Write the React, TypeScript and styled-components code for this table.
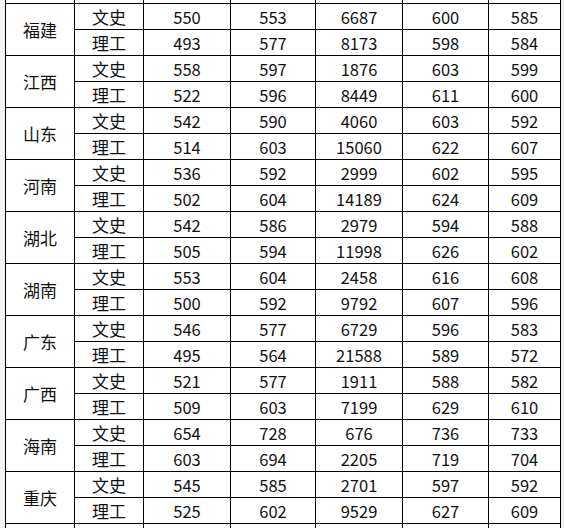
import React from "react";
import styled, { createGlobalStyle } from "styled-components";

interface Track {
  track: string;
  scores: string[];
}

interface Province {
  name: string;
  tracks: Track[];
}

const COLUMN_WIDTHS = [69, 69, 87, 85, 87, 86, 72];

const PROVINCES: Province[] = [
  {
    name: "福建",
    tracks: [
      { track: "文史", scores: ["550", "553", "6687", "600", "585"] },
      { track: "理工", scores: ["493", "577", "8173", "598", "584"] },
    ],
  },
  {
    name: "江西",
    tracks: [
      { track: "文史", scores: ["558", "597", "1876", "603", "599"] },
      { track: "理工", scores: ["522", "596", "8449", "611", "600"] },
    ],
  },
  {
    name: "山东",
    tracks: [
      { track: "文史", scores: ["542", "590", "4060", "603", "592"] },
      { track: "理工", scores: ["514", "603", "15060", "622", "607"] },
    ],
  },
  {
    name: "河南",
    tracks: [
      { track: "文史", scores: ["536", "592", "2999", "602", "595"] },
      { track: "理工", scores: ["502", "604", "14189", "624", "609"] },
    ],
  },
  {
    name: "湖北",
    tracks: [
      { track: "文史", scores: ["542", "586", "2979", "594", "588"] },
      { track: "理工", scores: ["505", "594", "11998", "626", "602"] },
    ],
  },
  {
    name: "湖南",
    tracks: [
      { track: "文史", scores: ["553", "604", "2458", "616", "608"] },
      { track: "理工", scores: ["500", "592", "9792", "607", "596"] },
    ],
  },
  {
    name: "广东",
    tracks: [
      { track: "文史", scores: ["546", "577", "6729", "596", "583"] },
      { track: "理工", scores: ["495", "564", "21588", "589", "572"] },
    ],
  },
  {
    name: "广西",
    tracks: [
      { track: "文史", scores: ["521", "577", "1911", "588", "582"] },
      { track: "理工", scores: ["509", "603", "7199", "629", "610"] },
    ],
  },
  {
    name: "海南",
    tracks: [
      { track: "文史", scores: ["654", "728", "676", "736", "733"] },
      { track: "理工", scores: ["603", "694", "2205", "719", "704"] },
    ],
  },
  {
    name: "重庆",
    tracks: [
      { track: "文史", scores: ["545", "585", "2701", "597", "592"] },
      { track: "理工", scores: ["525", "602", "9529", "627", "609"] },
    ],
  },
];

const GlobalStyle = createGlobalStyle`
  html, body {
    margin: 0;
    padding: 0;
    background: #f3f3f3;
  }
`;

const Viewport = styled.div`
  width: 564px;
  height: 528px;
  overflow: hidden;
  background: #f3f3f3;
`;

// the scan is cropped: a sliver of the row above and the row below shows
const Table = styled.table`
  margin: -23px 0 0 5px;
  width: 556px;
  table-layout: fixed;
  border-collapse: collapse;
  background: #ffffff;
  font-family: "Noto Sans CJK SC", "Noto Sans", sans-serif;
  font-size: 16.5px;
  color: #111111;
`;

const Col = styled.col<{ $width: number }>`
  width: ${({ $width }) => $width}px;
`;

const Row = styled.tr`
  height: 26px;
`;

const Cell = styled.td`
  padding: 0;
  border: 1px solid #000000;
  text-align: center;
  vertical-align: middle;
  line-height: 24px;
  white-space: nowrap;
`;

const ProvinceCell = styled(Cell)`
  font-size: 17px;
`;

const TrackCell = styled(Cell)`
  font-size: 17px;
`;

const EmptyRow: React.FC = () => (
  <Row>
    {COLUMN_WIDTHS.map((_, i) => (
      <Cell key={i} />
    ))}
  </Row>
);

const App: React.FC = () => (
  <>
    <GlobalStyle />
    <Viewport>
      <Table>
        <colgroup>
          {COLUMN_WIDTHS.map((w, i) => (
            <Col key={i} $width={w} />
          ))}
        </colgroup>
        <tbody>
          <EmptyRow />
          {PROVINCES.map((province) =>
            province.tracks.map((t, i) => (
              <Row key={province.name + t.track}>
                {i === 0 && (
                  <ProvinceCell rowSpan={province.tracks.length}>
                    {province.name}
                  </ProvinceCell>
                )}
                <TrackCell>{t.track}</TrackCell>
                {t.scores.map((score, j) => (
                  <Cell key={j}>{score}</Cell>
                ))}
              </Row>
            ))
          )}
          <EmptyRow />
        </tbody>
      </Table>
    </Viewport>
  </>
);

export default App;
